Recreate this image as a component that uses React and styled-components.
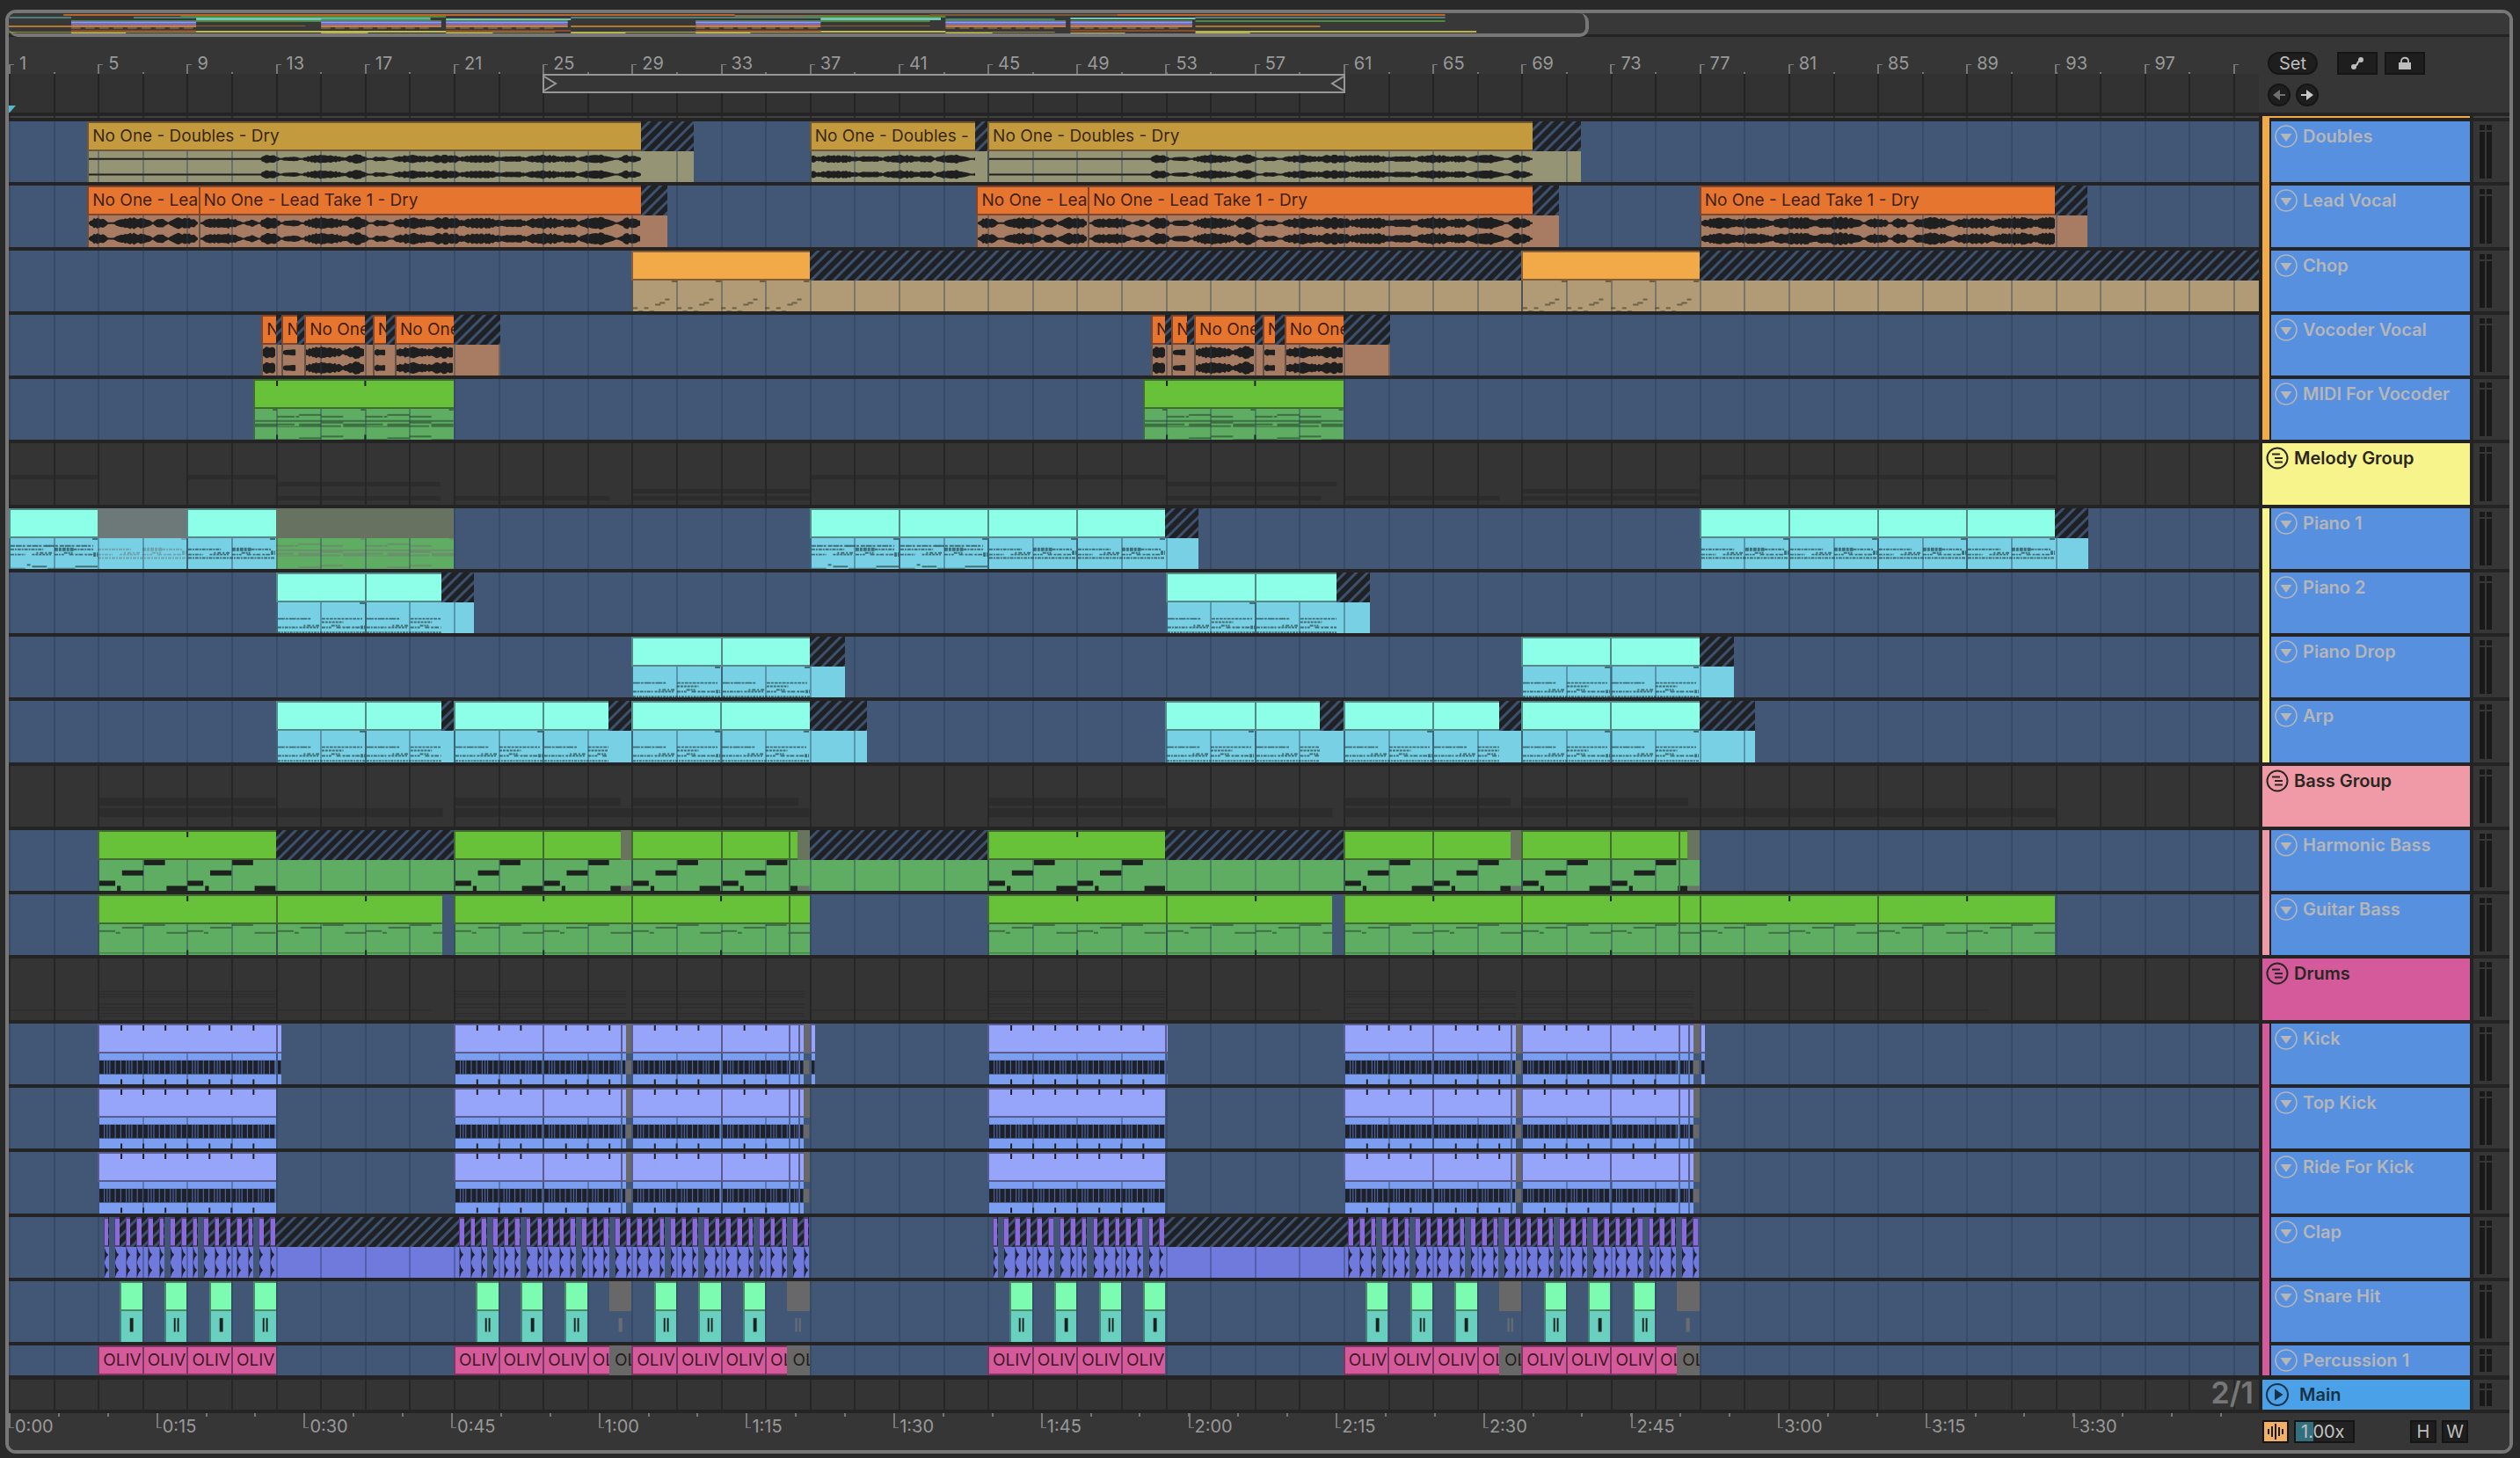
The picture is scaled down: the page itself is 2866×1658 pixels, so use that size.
import React from 'react';
import styled, { createGlobalStyle } from 'styled-components';

/* ---------- scale ---------- */
const BARS = 101.15; // bars visible in the arrangement
const BAR = 25.3; // drawing units per bar inside clip drawings
const pct = (bars) => `${(bars / BARS) * 100}%`;

const INK = '#1f1f1f';
const EDGE = '#242424';
const PANEL = '#363636';

const GlobalStyle = createGlobalStyle`
  * { box-sizing: border-box; }
  html, body, #root { height: 100%; }
  body {
    margin: 0;
    background: #292929;
    font-family: Inter, "Liberation Sans", sans-serif;
    font-size: 20px;
    line-height: 24px;
    color: #b5b5b5;
  }
  button, input { font: inherit; color: inherit; padding: 0; margin: 0; }
`;

/* ---------- frame ---------- */
const Page = styled.div`
  height: 100vh;
  min-height: 1200px;
  padding: 11px 8px 5px 6px;
  display: flex;
`;

const Frame = styled.main`
  flex: 1;
  min-width: 0;
  display: flex;
  flex-direction: column;
  border: 4px solid #777;
  border-radius: 12px;
  background: ${EDGE};
  overflow: hidden;
`;

const Overview = styled.div`
  display: flex;
  height: 27px;
  background: linear-gradient(#383838 24px, ${EDGE} 24px);
`;

const OverviewWindow = styled.div`
  width: 63.2%;
  border: solid #777;
  border-width: 0 4px 4px 0;
  border-radius: 0 10px 10px 10px;
  background: #383838;
  svg { display: block; width: 100%; height: 23px; }
`;

const Columns = styled.div`
  display: grid;
  grid-template-columns: minmax(0, 1fr) 285px;
`;

/* ---------- top ruler ---------- */
const RulerRow = styled(Columns)`
  height: 86px;
  flex: none;
  background: ${PANEL};
`;

const Ruler = styled.div`
  display: flex;
  flex-direction: column;
  min-width: 0;
`;

const BarNumbers = styled.div`
  height: 42px;
  display: flex;
  align-items: flex-end;
  overflow: hidden;
  background: repeating-linear-gradient(90deg, #777 0 2px, transparent 2px ${pct(2)}) 0 100% / 100% 2px no-repeat;
`;

const BarNumber = styled.div`
  flex: none;
  width: ${pct(4)};
  height: 24px;
  display: flex;
  gap: 6px;
  color: #999;
  line-height: 24px;
  &::before {
    content: "";
    flex: none;
    width: 4px;
    height: 11px;
    margin-top: 13px;
    border: solid #777;
    border-width: 1px 0 0 2px;
  }
`;

const gridLines = (colour) =>
  `repeating-linear-gradient(90deg, ${colour} 0 2px, transparent 2px ${pct(2)})`;

const ScrubArea = styled.div`
  flex: 1;
  display: flex;
  flex-direction: column;
  justify-content: space-between;
  background: ${gridLines('#242424')}, #323232;
`;

const LoopBrace = styled.div`
  height: 22px;
  margin-left: ${pct(24)};
  width: calc(${pct(36)} + 2px);
  display: flex;
  justify-content: space-between;
  border: 2px solid #979797;
  background: ${PANEL};
  svg { display: block; width: 16px; height: 18px; }
`;

const Locator = styled.svg`
  display: block;
  width: 8px;
  height: 8px;
`;

const SetPanel = styled.div`
  padding: 17px 0 0 10px;
  display: flex;
  flex-direction: column;
  gap: 10px;
`;

const ButtonRow = styled.div`
  display: flex;
  gap: ${(p) => p.$gap || 8}px;
`;

const DarkButton = styled.button`
  width: ${(p) => p.$w}px;
  height: 26px;
  display: flex;
  align-items: center;
  justify-content: center;
  border: 2px solid #151515;
  border-radius: ${(p) => (p.$round ? 13 : 0)}px;
  background: ${(p) => (p.$on ? '#f3b062' : '#1e1e1e')};
  color: #bdbdbd;
  line-height: 20px;
`;

/* ---------- tracks ---------- */
const Strip = styled(Columns)`
  flex: none;
  height: 10px;
  border-top: 4px solid ${EDGE};
`;

const StripLane = styled.div`
  height: 2px;
  background: ${gridLines('#2c2c2c')}, #414141;
`;

const StripSide = styled.div`
  display: flex;
  padding-left: 4px;
`;

const StripGroup = styled.div`
  width: 236px;
  height: 6px;
  border-top: 2px solid #f2a948;
  border-left: 8px solid #f2a948;
`;

const StripMeter = styled.div`
  flex: 1;
  height: 2px;
  margin-left: 4px;
  background: #414141;
`;

const Tracks = styled.div`
  flex: 1;
  min-height: 0;
  display: flex;
  flex-direction: column;
  gap: 4px;
`;

const TrackRow = styled(Columns)`
  flex: ${(p) => (p.$short ? 'none' : '1 1 0')};
  height: ${(p) => (p.$short ? '34px' : 'auto')};
  min-height: 34px;
`;

const Lane = styled.div`
  position: relative;
  display: flex;
  min-width: 0;
  overflow: hidden;
  background: ${(p) => (p.$group ? '#343434' : '#415775')};
  &::before {
    content: "";
    position: absolute;
    inset: 0;
    z-index: 1;
    pointer-events: none;
    background: ${(p) => gridLines(p.$group ? '#262626' : 'rgba(36, 56, 84, 0.38)')};
  }
`;

const LaneDrawing = styled.svg`
  display: block;
  width: 100%;
  height: 100%;
`;

const Clip = styled.div`
  flex: none;
  display: flex;
  flex-direction: column;
  min-width: 0;
`;

const Head = styled.div`
  position: relative;
  z-index: 2;
  flex: ${(p) => (p.$full ? 1 : 'none')};
  height: 34px;
  overflow: hidden;
  white-space: nowrap;
  padding-left: ${(p) => (p.$named ? 4 : 0)}px;
  font-size: 19px;
  line-height: 30px;
  color: rgba(20, 10, 5, 0.82);
  background: ${(p) => p.$colour};
  border: solid rgba(30, 20, 40, 0.5);
  border-width: 2px 0 2px ${(p) => (p.$thin ? 1 : 2)}px;
  svg { display: block; width: 100%; height: 6px; }
`;

const MutedHead = styled(Head)`
  border-color: transparent;
  background-clip: border-box;
`;

const Hatch = styled.div`
  position: relative;
  z-index: 2;
  flex: none;
  height: 34px;
  background: repeating-linear-gradient(135deg, #1f2125 0 5px, #3c516e 6px 8px, #1f2125 9px);
`;

const Body = styled.div`
  flex: 1;
  min-height: 0;
  background: ${(p) => p.$colour};
  border-left: ${(p) => (p.$edge ? (p.$thin ? 1 : 2) : 0)}px solid rgba(20, 30, 40, 0.45);
  svg { display: block; width: 100%; height: 100%; }
`;

const TrackSide = styled.div`
  display: flex;
  padding-left: 4px;
`;

const GroupBar = styled.div`
  width: 8px;
  margin-right: 2px;
  margin-bottom: ${(p) => (p.$last ? 0 : -4)}px;
  background: ${(p) => p.$colour};
`;

const TrackHeader = styled.header`
  flex: 1;
  min-width: 0;
  display: flex;
  align-items: flex-start;
  gap: ${(p) => p.$gap || 6}px;
  padding: 4px;
  background: ${(p) => p.$colour};
  color: ${(p) => p.$ink};
  font-weight: 600;
  white-space: nowrap;
  line-height: 26px;
`;

const FoldButton = styled.button`
  width: 26px;
  height: 26px;
  border: 0;
  background: none;
  svg { display: block; }
`;

const Meter = styled.div`
  width: 41px;
  margin-left: 4px;
  padding: 4px 0 4px 7px;
  display: grid;
  grid-template: 6px minmax(0, 1fr) / 6px 6px;
  gap: 2px;
  background: ${PANEL};
`;

const MeterCell = styled.div`
  background: #191919;
`;

/* ---------- bottom ---------- */
const MainRow = styled(Columns)`
  flex: none;
  height: 34px;
  margin-top: 5px;
`;

const GridValue = styled.output`
  position: relative;
  z-index: 2;
  margin-left: auto;
  padding-right: 6px;
  font-size: 34px;
  font-weight: 600;
  line-height: 30px;
  color: #777;
`;

const TimeRow = styled(Columns)`
  flex: none;
  height: 42px;
  margin-top: 4px;
  background: ${PANEL};
`;

const TimeRuler = styled.div`
  display: flex;
  overflow: hidden;
  background: repeating-linear-gradient(90deg, #777 0 2px, transparent 2px 2.184%) 0 0 / 100% 4px no-repeat;
`;

const TimeMark = styled.div`
  flex: none;
  width: 6.553%;
  display: flex;
  gap: 1px;
  color: #999;
  line-height: 30px;
  &::before {
    content: "";
    width: 4px;
    height: 16px;
    border: solid #777;
    border-width: 0 0 1px 2px;
  }
`;

const TimeSide = styled.div`
  padding: 8px 47px 0 4px;
  display: flex;
  gap: 6px;
`;

const SpeedInput = styled.input`
  width: 69px;
  height: 26px;
  margin-right: auto;
  padding-left: 6px;
  border: 2px solid #151515;
  background: linear-gradient(90deg, #33707f 20px, #222 20px);
  color: #c4c4c4;
`;

/* ---------- clip drawings ---------- */
const noise = (n) => {
  const v = Math.sin(n * 127.1 + 11.7) * 43758.5453;
  return v - Math.floor(v);
};

// phrases: [from bar, to bar, peak]
const px = (x) => (x / 1.633 - 11) / BAR + 1;
const PHRASES = [
  [165, 200, 0.9], [212, 283, 0.95], [286, 312, 0.7], [314, 369, 0.95], [372, 447, 0.9],
  [452, 478, 0.6], [482, 518, 1], [522, 558, 0.55], [562, 640, 0.95], [640, 684, 1],
  [690, 722, 0.55], [730, 800, 0.9], [790, 860, 1], [850, 935, 0.95], [930, 980, 0.75],
  [978, 1045, 1], [1040, 1076, 0.8], [1076, 1142, 1], [1150, 1192, 0.9],
].map(([a, b, p]) => [px(a), px(b), p]);
const px3 = (x) => (x * 0.6543 + 1840 - 11) / BAR + 1;
const PHRASES_END = [
  [142, 210, 0.9], [200, 270, 0.9], [265, 350, 1], [340, 426, 1], [430, 470, 0.85],
  [476, 504, 0.8], [512, 582, 0.95], [582, 660, 0.9], [650, 735, 1], [725, 775, 1],
].map(([a, b, p]) => [px3(a), px3(b), p]);

const envelope = (bar, phrases) => {
  let level = 0.1;
  phrases.forEach(([a, b, peak]) => {
    if (bar > a && bar < b) {
      const t = (bar - a) / (b - a);
      level = Math.max(level, peak * Math.pow(Math.sin(Math.PI * t), 0.4));
    }
  });
  return level;
};

function Wave({ from, to, shift = 0, size = 7, silentUntil = 0, phrases = PHRASES }) {
  const width = (to - from) * BAR;
  const levels = [];
  for (let x = 0; x <= width; x += 2) {
    const bar = from - shift + x / BAR;
    const base = bar < silentUntil ? 0.1 : envelope(bar, phrases);
    levels.push([x, Math.max(1, base * size * (base < 0.12 ? 1 : 0.68 + 0.42 * noise(Math.round(bar * 12))))]);
  }
  const shape = (cy) =>
    levels.map(([x, l]) => `${x.toFixed(1)},${(cy - l).toFixed(1)}`)
      .concat(levels.slice().reverse().map(([x, l]) => `${x.toFixed(1)},${(cy + l).toFixed(1)}`))
      .join(' ');
  return (
    <svg viewBox={`0 0 ${width} 36`} preserveAspectRatio="none" aria-hidden="true">
      <polygon points={shape(9)} fill={INK} />
      <polygon points={shape(27)} fill={INK} />
    </svg>
  );
}

// note: [x in bars, length in bars, y, height]
const NOTES = {
  bass: { colour: '#1c211e', notes: [[0, 0.72, 24, 6], [0.8, 0.17, 30, 6], [1.03, 0.97, 12, 6], [2.03, 0.95, 0, 6], [3.05, 0.95, 30, 6]] },
  guitar: { colour: '#3f7143', notes: [[0, 0.72, 7, 2], [0.75, 0.2, 9, 2], [1.03, 0.97, 3, 2], [2.03, 0.95, 0, 2], [3.05, 0.95, 9, 2], [0, 4, 33, 1]] },
  chop: { colour: '#6c6045', notes: [[0, 0.2, 31, 2], [0.25, 0.2, 35, 1], [0.5, 0.2, 31, 2], [0.75, 0.2, 35, 1], [1, 0.25, 27, 2], [1.2, 0.25, 25, 2], [1.45, 0.2, 21, 2], [1.75, 0.25, 0, 2]], length: 2 },
  vocoder: {
    colour: '#3c6f42',
    notes: [[0, 0.8, 8, 2], [0.85, 0.15, 8, 2], [1, 1, 6, 2], [2, 1, 8, 2], [0, 4, 13, 2], [2, 1, 14, 3], [0, 0.8, 17, 2], [1, 1, 17, 4], [2, 0.9, 19, 2], [3, 1, 17, 4], [0, 1, 20, 1], [1, 1, 33, 2], [2, 1, 31, 2], [0, 1, 35, 1], [3, 1, 35, 1], [3.8, 0.2, 0, 2]],
  },
};

const dash = (a, b, y, h = 2, pattern = '4 1 2 1') => ({ a, b, y, h, pattern });
const jitter = [
  dash(25, 47, 19, 2, '3 1'), dash(30, 50, 17, 2, '2 2 4 2'), dash(51, 62, 19, 2), dash(62, 72, 17, 2), dash(68, 95, 19, 2, '5 2 3 1'),
];
const lift = (items, dy) => items.map((d) => ({ ...d, y: d.y + dy }));
const PIANO = {
  a: [dash(0, 96, 9, 2, '5 1 7 1 3 2'), dash(40, 46, 9, 2, '6 0'), dash(0, 38, 13), dash(51, 73, 13, 4, '4 1 3 1'), dash(73, 96, 13), dash(0, 17, 19), ...jitter, dash(96, 101, 19, 5, '3 1'), dash(19, 24, 31), dash(25, 42, 33, 2, '20 0'), dash(75, 101, 33, 2, '30 0'), dash(0, 17, 35, 1, '20 0'), dash(43, 75, 35, 1, '40 0')],
  b: [dash(0, 38, 13), dash(51, 73, 13, 4, '4 1 3 1'), dash(73, 97, 13), dash(0, 17, 19), ...jitter, dash(96, 101, 17, 5, '3 1'), dash(0, 101, 23, 2, '4 1 2 1')],
  c: [dash(0, 38, 19, 2, '8 1 3 1'), dash(51, 98, 19, 2, '4 1 3 1'), dash(51, 76, 23, 2, '3 1'), dash(0, 24, 29), ...lift(jitter, 10), dash(96, 101, 29, 4, '3 1'), dash(0, 101, 35, 2, '3 1 2 1')],
};

function Piano({ length, pattern, faint }) {
  return (
    <svg viewBox={`0 0 ${length * BAR} 36`} preserveAspectRatio="none" aria-hidden="true">
      <g stroke={faint ? '#70a3af' : '#3f6e78'}>
        {PIANO[pattern].filter((d) => d.a < length * BAR).map((d, i) => (
          <line key={i} x1={d.a} x2={Math.min(d.b, length * BAR)} y1={d.y} y2={d.y} strokeWidth={d.h} strokeDasharray={d.pattern} />
        ))}
        {length >= 4 && <line x1="95" x2="101" y1="1" y2="1" strokeWidth="2" />}
      </g>
    </svg>
  );
}

function Notes({ from, to, kind, origin = from, ticks = [], faint }) {
  const length = to - from;
  const set = NOTES[kind];
  const size = set.length || 4;
  const items = [];
  for (let base = origin - size * 2; base < to; base += size) {
    if (base + size <= from) continue;
    set.notes.forEach(([x, len, y, h], i) => {
      items.push(
        <rect key={`${base}-${i}`} x={(base - from + x) * BAR} y={y} width={len * BAR} height={h} />,
      );
    });
  }
  return (
    <svg viewBox={`0 0 ${length * BAR} 36`} preserveAspectRatio="none" aria-hidden="true">
      <g fill={faint ? '#6a8f6c' : set.colour}>{items}</g>
      {kind !== 'bass' && ticks.map((t) => <rect key={t} x={(t - from) * BAR - 1} y="30" width="2" height="6" fill={INK} />)}
    </svg>
  );
}

function KickHits({ from, to, ticks = [] }) {
  const gaps = [];
  for (let i = 0; i < (to - from) * 4; i += 1) {
    gaps.push(i * 0.25 + 0.2);
    if (i % 4 === 1) gaps.push(i * 0.25 + 0.08);
  }
  return (
    <svg viewBox={`0 0 ${(to - from) * BAR} 36`} preserveAspectRatio="none" aria-hidden="true">
      <rect x="0" y="8" width={(to - from) * BAR} height="16" fill="#1e2129" />
      {gaps.map((g) => <rect key={g} x={g * BAR} y="8" width="1.2" height="16" fill="#4c639f" />)}
      {ticks.map((t) => <rect key={t} x={(t - from) * BAR - 1} y="30" width="2" height="6" fill={INK} />)}
    </svg>
  );
}

function ClapHit({ length }) {
  return (
    <svg viewBox={`0 0 ${length * BAR} 36`} preserveAspectRatio="none" aria-hidden="true">
      <path d="M0 1 L2 6 L5 9 L2 12 L0 17 Z M0 19 L2 24 L5 27 L2 30 L0 35 Z" fill="#1f2030" />
    </svg>
  );
}

function SnareHit({ double, faint }) {
  const fill = faint ? '#696d72' : '#18241f';
  return (
    <svg viewBox="0 0 24 36" preserveAspectRatio="none" aria-hidden="true">
      {double ? (
        <>
          <rect x="9" y="8" width="2" height="16" fill={fill} />
          <rect x="13" y="8" width="2" height="16" fill={fill} />
        </>
      ) : (
        <rect x="10" y="8" width="4" height="16" fill={fill} />
      )}
    </svg>
  );
}

/* ---------- arrangement data ---------- */
const clip = (from, to, more = {}) => ({ from, to, kind: 'clip', ...more });
const tail = (from, to, more = {}) => ({ from, to, kind: 'tail', ...more });
const muted = (from, to, more = {}) => ({ from, to, kind: 'muted', ...more });

const LEAD = 'No One - Lead Take 1 - Dry';
const DOUBLES = 'No One - Doubles - Dry';

const vocoder = (o) => [
  clip(12.35 + o, 13 + o, { name: 'N' }), tail(13 + o, 13.27 + o), clip(13.27 + o, 13.95 + o, { name: 'N' }), tail(13.95 + o, 14.29 + o),
  clip(14.29 + o, 17.02 + o, { name: 'No One' }), tail(17.02 + o, 17.36 + o), clip(17.36 + o, 17.94 + o, { name: 'N' }), tail(17.94 + o, 18.35 + o),
  clip(18.35 + o, 21 + o, { name: 'No One' }), tail(21 + o, 23.1 + o),
].map((s) => ({ ...s, shift: o }));

const every = (from, to, step, more) => {
  const out = [];
  for (let b = from; b < to; b += step) out.push(clip(b, Math.min(to, b + step), more));
  return out;
};

const bassHalf = (o) => [
  clip(21 + o, 25 + o), clip(25 + o, 28.5 + o), muted(28.5 + o, 29 + o, { body: '#5fac63' }),
  clip(29 + o, 33 + o), clip(33 + o, 36.05 + o), clip(36.05 + o, 36.46 + o, { origin: 33 + o }), muted(36.46 + o, 37 + o, { body: '#5fac63' }),
];

const span = (a, b) => Array.from({ length: b - a + 1 }, (_, i) => a + i);
const kickHalf = (o, last) => [
  clip(21 + o, 25 + o, { ticks: span(22 + o, 24 + o) }), clip(25 + o, 28.53 + o, { ticks: span(26 + o, 28 + o) }),
  clip(28.53 + o, 28.75 + o), muted(28.75 + o, 29 + o, { band: true }),
  clip(29 + o, 33 + o, { ticks: span(30 + o, 32 + o) }), clip(33 + o, 36.05 + o, { ticks: span(34 + o, 35 + o) }),
  clip(36.05 + o, 36.5 + o), clip(36.5 + o, 36.75 + o), muted(36.75 + o, 37 + o, { band: true }),
  ...(last ? [clip(37 + o, 37.25 + o)] : []),
];
const kicks = (last) => [
  clip(5, 13, { ticks: span(6, 12) }), ...(last ? [clip(13, 13.25)] : []),
  ...kickHalf(0, last),
  clip(45, 53, { ticks: span(46, 52) }), ...(last ? [clip(53, 53.1)] : []),
  ...kickHalf(40, last),
];

const claps = (base, runs) => {
  const out = [];
  let k = 0;
  runs.forEach((n) => {
    for (let i = 0; i < n; i += 1, k += 1) {
      const at = base + 0.25 + k * 0.5;
      const end = i === n - 1 ? at + 0.25 : at + 0.5;
      out.push(clip(at, at + 0.22), tail(at + 0.22, end));
    }
  });
  return out;
};
const LONG_RUNS = [3, 3, 5, 3, 5, 3, 5, 3, 2];
const SHORT_RUNS = [1, 5, 3, 5, 2];

const snares = (start, doubles) =>
  doubles.map((d, i) => {
    const at = start + i * 2;
    return d.muted ? muted(at, at + 1, d) : clip(at, at + 1, d);
  });
const S = { double: false };
const D = { double: true };
const M = (double) => ({ double, muted: true, hit: true });

const oliv = { name: 'OLIV' };
const ol = { name: 'OL' };
const percHalf = (o) => [
  ...every(21 + o, 27 + o, 2, oliv), clip(27 + o, 28 + o, ol), muted(28 + o, 29 + o, ol),
  ...every(29 + o, 35 + o, 2, oliv), clip(35 + o, 36 + o, ol), muted(36 + o, 37 + o, ol),
];

const GREEN = { head: '#67c23a', body: '#5fac63' };
const MINT = { head: '#8dfee8', body: '#78d0e4' };
const VIOLET = { head: '#96a5f9', body: '#7c9ef0' };
const ORANGE = { head: '#e6752f', body: '#a87c62' };

const TRACKS = [
  {
    name: 'Doubles', bar: '#f2a948', head: '#c49a3f', body: '#959575', draw: 'wave', size: 5,
    clips: [
      clip(4.53, 29.44, { name: DOUBLES, silentUntil: 12.3 }), tail(29.44, 31.79),
      clip(37, 44.46, { name: 'No One - Doubles -', shift: 16 }), tail(44.46, 45),
      clip(45, 69.52, { name: DOUBLES, shift: 40, silentUntil: 12.3 }), tail(69.52, 71.67),
    ],
  },
  {
    name: 'Lead Vocal', bar: '#f2a948', ...ORANGE, draw: 'wave', size: 7,
    clips: [
      clip(4.53, 9.52, { name: 'No One - Lea' }), clip(9.52, 29.44, { name: LEAD }), tail(29.44, 30.6),
      clip(44.5, 49.5, { name: 'No One - Lea', shift: 40 }), clip(49.5, 69.52, { name: LEAD, shift: 40 }), tail(69.52, 70.67),
      clip(77, 93, { name: LEAD, phrases: PHRASES_END }), tail(93, 94.45),
    ],
  },
  {
    name: 'Chop', bar: '#f2a948', head: '#f2a948', body: '#b09b76', draw: 'chop',
    clips: [clip(29, 37), tail(37, 69), clip(69, 77), tail(77, 102.15)],
  },
  { name: 'Vocoder Vocal', bar: '#f2a948', ...ORANGE, draw: 'wave', size: 7, clips: [...vocoder(0), ...vocoder(40)] },
  {
    name: 'MIDI For Vocoder', bar: '#f2a948', last: true, ...GREEN, draw: 'vocoder',
    clips: [clip(12, 21, { ticks: [13, 17], origin: 13 }), clip(52, 61, { ticks: [53, 57], origin: 53 })],
  },
  {
    name: 'Melody Group', group: true, colour: '#f7f48b',
    shadows: [
      [36, 5, [[1, 5], [9, 13], [37, 53], [77, 93]]],
      [44, 5, [[13, 20.4], [53, 60.7]]],
      [52, 5, [[29, 37], [69, 77]]],
      [60, 5, [[13, 20.4], [21, 28], [29, 37], [53, 60], [61, 68], [69, 77]]],
    ],
  },
  {
    name: 'Piano 1', bar: '#f7f48b', ...MINT, draw: 'piano',
    clips: [
      clip(1, 5, { pattern: 'a' }), muted(5, 9, { pattern: 'b', head: '#6d7979', body: '#78d0e4' }), clip(9, 13, { pattern: 'b' }),
      muted(13, 21, { head: '#677360', body: '#5fac63', notes: 'vocoder' }),
      ...every(37, 45, 4, { pattern: 'a' }), ...every(45, 53, 4, { pattern: 'b' }), tail(53, 54.5),
      ...every(77, 93, 4, { pattern: 'b' }), tail(93, 94.5),
    ],
  },
  {
    name: 'Piano 2', bar: '#f7f48b', ...MINT, draw: 'piano', pattern: 'c',
    clips: [clip(13, 17), clip(17, 20.43), tail(20.43, 21.9), clip(53, 57), clip(57, 60.7), tail(60.7, 62.2)],
  },
  {
    name: 'Piano Drop', bar: '#f7f48b', ...MINT, draw: 'piano', pattern: 'c',
    clips: [clip(29, 33), clip(33, 37), tail(37, 38.6), clip(69, 73), clip(73, 77), tail(77, 78.55)],
  },
  {
    name: 'Arp', bar: '#f7f48b', last: true, ...MINT, draw: 'piano', pattern: 'c',
    clips: [
      clip(13, 17), clip(17, 20.43), tail(20.43, 21), clip(21, 25), clip(25, 27.97), tail(27.97, 29), clip(29, 33), clip(33, 37), tail(37, 39.6),
      clip(53, 57), clip(57, 59.95), tail(59.95, 61), clip(61, 65), clip(65, 68), tail(68, 69), clip(69, 73), clip(73, 77), tail(77, 79.5),
    ],
  },
  {
    name: 'Bass Group', group: true, colour: '#f09aa8',
    shadows: [
      [36, 9, [[5, 13], [21, 28.5], [29, 36.5], [45, 53], [61, 68.5], [69, 76.5]]],
      [48, 10, [[5, 20.5], [21, 37], [45, 60.5], [61, 93]]],
    ],
  },
  {
    name: 'Harmonic Bass', bar: '#f09aa8', ...GREEN, draw: 'bass',
    clips: [
      clip(5, 13, { ticks: [9] }), tail(13, 21), ...bassHalf(0), tail(37, 45),
      clip(45, 53, { ticks: [49] }), tail(53, 61), ...bassHalf(40),
    ],
  },
  {
    name: 'Guitar Bass', bar: '#f09aa8', last: true, ...GREEN, draw: 'guitar',
    clips: [
      clip(5, 13, { ticks: [9] }), clip(13, 20.5, { ticks: [17] }),
      clip(21, 29, { ticks: [25] }), clip(29, 36.05, { ticks: [33] }), clip(36.05, 37, { origin: 33 }),
      clip(45, 53, { ticks: [49] }), clip(53, 60.5, { ticks: [57] }),
      clip(61, 69, { ticks: [65] }), clip(69, 76.05, { ticks: [73] }), clip(76.05, 77, { origin: 73 }),
      clip(77, 85, { ticks: [81] }), clip(85, 93, { ticks: [89] }),
    ],
  },
  {
    name: 'Drums', group: true, colour: '#d45a9c',
    shadows: [37, 40, 43, 51, 55, 62, 65].map((y) => [y, 1, [[5, 13], [21, 28.75], [29, 36.75], [45, 53], [61, 68.75], [69, 76.75]]])
      .concat([[58, 1, [[1, 20], [37, 60], [77, 90]]]]),
  },
  { name: 'Kick', bar: '#d45a9c', ...VIOLET, draw: 'kick', clips: kicks(true) },
  { name: 'Top Kick', bar: '#d45a9c', ...VIOLET, draw: 'kick', clips: kicks(false) },
  { name: 'Ride For Kick', bar: '#d45a9c', ...VIOLET, draw: 'kick', clips: kicks(false) },
  {
    name: 'Clap', bar: '#d45a9c', head: '#8a6bdc', body: '#6f7adc', draw: 'clap', thin: true,
    clips: [
      ...claps(5, SHORT_RUNS), tail(13, 21.25), ...claps(21, LONG_RUNS),
      ...claps(45, SHORT_RUNS), tail(53, 61.25), ...claps(61, LONG_RUNS),
    ],
  },
  {
    name: 'Snare Hit', bar: '#d45a9c', head: '#7cfcb0', body: '#69d0c0', draw: 'snare',
    clips: [
      ...snares(6, [S, D, S, D]), ...snares(22, [D, S, D, M(false), D, D, S, M(true)]),
      ...snares(46, [D, S, D, S]), ...snares(62, [S, D, S, M(true), D, S, D, M(false)]),
    ],
  },
  {
    name: 'Percussion 1', bar: '#d45a9c', last: true, short: true, head: '#d45a9c', body: '#d45a9c', draw: 'none',
    clips: [...every(5, 13, 2, oliv), ...percHalf(0), ...every(45, 53, 2, oliv), ...percHalf(40)],
  },
];

/* ---------- components ---------- */
function ClipDrawing({ track, item }) {
  const { from, to } = item;
  if (item.kind === 'tail') return null;
  if (item.notes) return <Notes from={from} to={to} kind={item.notes} faint />;
  if (item.hit) return <SnareHit double={item.double} faint />;
  if (item.band) {
    return (
      <svg viewBox="0 0 6 36" preserveAspectRatio="none" aria-hidden="true">
        <rect x="0" y="8" width="6" height="16" fill="#696969" />
      </svg>
    );
  }
  switch (track.draw) {
    case 'wave':
      return <Wave from={from} to={to} shift={item.shift} size={track.size} silentUntil={item.silentUntil} phrases={item.phrases} />;
    case 'piano':
      return <Piano length={to - from} pattern={item.pattern || track.pattern} faint={item.kind === 'muted'} />;
    case 'bass':
      if (item.kind === 'muted') {
        return (
          <svg viewBox="0 0 12 36" preserveAspectRatio="none" aria-hidden="true">
            <rect x="0" y="30" width="12" height="6" fill="#69746a" />
          </svg>
        );
      }
      return <Notes from={from} to={to} kind="bass" origin={item.origin} />;
    case 'chop':
    case 'vocoder':
    case 'guitar':
      return <Notes from={from} to={to} kind={track.draw} origin={item.origin} ticks={item.ticks} />;
    case 'kick':
      return <KickHits from={from} to={to} ticks={item.ticks} />;
    case 'clap':
      return <ClapHit length={to - from} />;
    case 'snare':
      return <SnareHit double={item.double} />;
    default:
      return null;
  }
}

function HeadTicks({ item }) {
  return (
    <svg viewBox={`0 0 ${(item.to - item.from) * BAR} 6`} preserveAspectRatio="none" aria-hidden="true">
      {item.ticks.map((t) => <rect key={t} x={(t - item.from) * BAR - 1} y="0" width="2" height="6" fill={INK} />)}
    </svg>
  );
}

function ClipView({ track, item, gap }) {
  const isMuted = item.kind === 'muted';
  const bodyColour = isMuted ? item.body || 'transparent' : track.body;
  return (
    <Clip style={{ width: pct(item.to - item.from), marginLeft: pct(gap) }}>
      {item.kind === 'tail' && <Hatch />}
      {isMuted && (
        <MutedHead $colour={item.head || (track.draw === 'bass' ? '#69745f' : '#686868')} $full={track.short} $named={Boolean(item.name)}>
          {item.name}
        </MutedHead>
      )}
      {item.kind === 'clip' && (
        <Head $colour={track.head} $full={track.short} $thin={track.thin} $named={Boolean(item.name)}>
          {item.name}
          {item.ticks && <HeadTicks item={item} />}
        </Head>
      )}
      {!track.short && (
        <Body $colour={bodyColour} $edge={item.kind === 'clip'} $thin={track.thin}>
          <ClipDrawing track={track} item={item} />
        </Body>
      )}
    </Clip>
  );
}

function Clips({ track }) {
  let cursor = 1;
  return track.clips.map((item) => {
    const gap = item.from - cursor;
    cursor = item.to;
    return <ClipView key={item.from} track={track} item={item} gap={gap} />;
  });
}

function GroupShadows({ shadows }) {
  return (
    <LaneDrawing viewBox={`0 0 ${BARS} 69`} preserveAspectRatio="none" aria-hidden="true">
      {shadows.map(([y, h, spans]) =>
        spans.map(([a, b]) => <rect key={`${y}-${a}`} x={a - 1} y={y} width={b - a} height={h} fill="#2c2c2c" />),
      )}
    </LaneDrawing>
  );
}

const FoldIcon = () => (
  <svg width="26" height="26" viewBox="0 0 26 26" aria-hidden="true">
    <circle cx="13" cy="13" r="12" fill="none" stroke="currentColor" strokeWidth="1.600" />
    <path d="M6.500 10 H19.500 L13 19 Z" fill="currentColor" />
  </svg>
);

const GroupIcon = () => (
  <svg width="26" height="26" viewBox="0 0 26 26" fill="none" stroke="currentColor" aria-hidden="true">
    <circle cx="13" cy="13" r="11.500" strokeWidth="2" />
    <path d="M7 8.500 H16 M10 13 H19 M10 17.500 H19" strokeWidth="2" />
  </svg>
);

const PlayIcon = () => (
  <svg width="26" height="26" viewBox="0 0 26 26" aria-hidden="true">
    <circle cx="13" cy="13" r="12" fill="none" stroke="currentColor" strokeWidth="2" />
    <path d="M10 6.500 V19.500 L19.500 13 Z" fill="currentColor" />
  </svg>
);

function LevelMeter() {
  return (
    <Meter aria-hidden="true">
      <MeterCell /><MeterCell /><MeterCell /><MeterCell />
    </Meter>
  );
}

function Track({ track }) {
  return (
    <TrackRow $short={track.short}>
      <Lane $group={track.group}>
        {track.group ? <GroupShadows shadows={track.shadows} /> : <Clips track={track} />}
      </Lane>
      <TrackSide>
        {!track.group && <GroupBar $colour={track.bar} $last={track.last} />}
        <TrackHeader $colour={track.group ? track.colour : '#5890e0'} $ink={track.group ? '#2a2722' : '#b5b6b8'} $gap={6}>
          <FoldButton aria-label={`Fold ${track.name}`}>{track.group ? <GroupIcon /> : <FoldIcon />}</FoldButton>
          {track.name}
        </TrackHeader>
        <LevelMeter />
      </TrackSide>
    </TrackRow>
  );
}

// overview lines: [bar from, bar to, y, height, colour]
const section = (o, len) => [
  [o, o + len, 8, 1, '#4f8a3c'], [o, o + len, 9, 4, '#6f74bd'], [o, o + len, 10, 1, '#8d9df0'], [o, o + len, 13, 1, '#b5528a'],
  [o, o + len, 14, 2, '#b58a3c'],
];
const OVERVIEW = [
  [4.5, 47.5, 1, 2, '#bd642a'], [47.5, 60, 2, 2, '#8f6a3c'], [60, 72, 1, 2, '#7a5a34'], [72, 93, 1, 2, '#bd642a'],
  [12, 29, 3, 2, '#4f8a30'], [52, 61, 3, 2, '#4f8a30'],
  [1, 5, 4, 2, '#4d7f7b'], [9, 13, 4, 2, '#4d7f7b'], [37, 53, 4, 2, '#4d7f7b'], [77, 93, 4, 2, '#4d7f7b'],
  [13, 28, 5, 3, '#74c4b8'], [29, 37, 6, 2, '#74c4b8'], [21, 28, 6, 2, '#4d9b86'], [53, 60.7, 5, 3, '#74c4b8'], [69, 77, 5, 2, '#74c4b8'],
  [5, 28, 8, 2, '#4f8a3c'], [45, 60, 8, 2, '#4f8a3c'], [77, 93, 8, 2, '#4f8a3c'],
  [61, 68, 6, 2, '#4d7f7b'],
  ...section(5, 8), ...section(21, 7.7), ...section(29, 7.8), ...section(45, 8), ...section(61, 7.7), ...section(69, 7.8),
  [1, 5, 14, 2, '#b07c2c'], [13, 20, 14, 1, '#8a6230'], [37, 45, 14, 2, '#b07c2c'], [53, 60, 14, 1, '#8a6230'], [77, 85, 14, 2, '#a8762c'],
  [5, 13, 19, 2, '#8c4a2c'], [29, 37, 19, 2, '#8c4a2c'], [45, 53, 19, 2, '#8c4a2c'], [69, 77, 19, 2, '#8c4a2c'],
  [1, 13, 21, 1, '#96903c'], [13, 29, 20, 2, '#c0bc4c'], [29, 36, 21, 1, '#96903c'], [37, 53, 21, 1, '#b8b44a'], [53, 61, 20, 2, '#c0bc4c'], [61, 68, 21, 1, '#96903c'], [77, 95, 20, 2, '#b8b44a'],
  [5, 8.5, 22, 1, '#b8b44a'], [21, 24, 22, 1, '#b8b44a'], [29, 32, 22, 1, '#b8b44a'], [37, 40.5, 22, 1, '#b8b44a'], [45, 48.5, 22, 1, '#b8b44a'], [61, 64, 22, 1, '#b8b44a'], [69, 72.5, 22, 1, '#b8b44a'], [77, 80.5, 22, 1, '#b8b44a'],
];
const DASHED = [[5, 13], [21, 28], [29, 36], [45, 53], [61, 68], [69, 76]];

function OverviewDrawing() {
  return (
    <svg viewBox="1 0 101 23" preserveAspectRatio="none" aria-hidden="true">
      {OVERVIEW.map(([a, b, y, h, colour], i) => <rect key={i} x={a} y={y} width={b - a} height={h} fill={colour} />)}
      {DASHED.map(([a, b]) => (
        <line key={a} x1={a} x2={b} y1="17" y2="17" stroke="#735c40" strokeWidth="2" strokeDasharray="0.600 0.300" />
      ))}
    </svg>
  );
}

const BAR_NUMBERS = Array.from({ length: 25 }, (_, i) => 1 + i * 4);
const TIMES = Array.from({ length: 15 }, (_, i) => `${Math.floor(i / 4)}:${String((i % 4) * 15).padStart(2, '0')}`);

export default function App() {
  return (
    <Page>
      <GlobalStyle />
      <Frame>
        <Overview>
          <OverviewWindow><OverviewDrawing /></OverviewWindow>
        </Overview>

        <RulerRow>
          <Ruler>
            <BarNumbers>
              {BAR_NUMBERS.map((n) => <BarNumber key={n}>{n}</BarNumber>)}
              <BarNumber />
            </BarNumbers>
            <ScrubArea>
              <LoopBrace>
                <svg viewBox="0 0 16 18" aria-hidden="true"><path d="M0 1 L13 9 L0 17" fill="none" stroke="#979797" strokeWidth="2" /></svg>
                <svg viewBox="0 0 16 18" aria-hidden="true"><path d="M16 1 L3 9 L16 17" fill="none" stroke="#979797" strokeWidth="2" /></svg>
              </LoopBrace>
              <Locator viewBox="0 0 8 8" aria-hidden="true"><path d="M0 0 H8 L1 8 H0 Z" fill="#55b8ce" /></Locator>
            </ScrubArea>
          </Ruler>
          <SetPanel>
            <ButtonRow $gap={22}>
              <DarkButton $w={57} $round>Set</DarkButton>
              <ButtonRow>
                <DarkButton $w={46} aria-label="Automation mode">
                  <svg width="16" height="16" viewBox="0 0 16 16" aria-hidden="true">
                    <circle cx="4" cy="12" r="3" fill="currentColor" />
                    <circle cx="12" cy="4" r="3" fill="currentColor" />
                    <path d="M4 12 L7.500 9.500 L9 6.500 L12 4" fill="none" stroke="currentColor" strokeWidth="2.200" />
                  </svg>
                </DarkButton>
                <DarkButton $w={46} aria-label="Lock envelopes">
                  <svg width="16" height="16" viewBox="0 0 16 16" aria-hidden="true">
                    <rect x="1" y="7" width="14" height="8" fill="currentColor" />
                    <path d="M4 8 V5.500 C4 0.500 12 0.500 12 5.500 V8" fill="none" stroke="currentColor" strokeWidth="1.800" />
                  </svg>
                </DarkButton>
              </ButtonRow>
            </ButtonRow>
            <ButtonRow $gap={6}>
              <DarkButton $w={26} $round aria-label="Previous locator">
                <svg width="14" height="12" viewBox="0 0 14 12" aria-hidden="true"><path d="M0 6 L8 0 V5 H14 V7 H8 V12 Z" fill="#707070" /></svg>
              </DarkButton>
              <DarkButton $w={26} $round aria-label="Next locator">
                <svg width="14" height="12" viewBox="0 0 14 12" aria-hidden="true"><path d="M14 6 L6 0 V5 H0 V7 H6 V12 Z" fill="#c8c8c8" /></svg>
              </DarkButton>
            </ButtonRow>
          </SetPanel>
        </RulerRow>

        <Strip>
          <StripLane />
          <StripSide><StripGroup /><StripMeter /></StripSide>
        </Strip>

        <Tracks>
          {TRACKS.map((track) => <Track key={track.name} track={track} />)}
        </Tracks>

        <MainRow>
          <Lane $group><GridValue>2/1</GridValue></Lane>
          <TrackSide>
            <TrackHeader $colour="#4aa1e8" $ink="#173247" $gap={12}>
              <FoldButton aria-label="Show Main"><PlayIcon /></FoldButton>
              Main
            </TrackHeader>
            <LevelMeter />
          </TrackSide>
        </MainRow>

        <TimeRow>
          <TimeRuler>
            {TIMES.map((t) => <TimeMark key={t}>{t}</TimeMark>)}
          </TimeRuler>
          <TimeSide>
            <DarkButton $w={30} $on aria-label="Scrub waveform">
              <svg width="20" height="20" viewBox="0 0 20 20" aria-hidden="true">
                <path d="M2 7 V13 M6 4 V16 M10 1 V19 M14 5 V15 M18 7 V13" stroke="#1a1a1a" strokeWidth="2" />
              </svg>
            </DarkButton>
            <SpeedInput defaultValue="1.00x" aria-label="Zoom factor" />
            <DarkButton $w={30}>H</DarkButton>
            <DarkButton $w={30}>W</DarkButton>
          </TimeSide>
        </TimeRow>
      </Frame>
    </Page>
  );
}
